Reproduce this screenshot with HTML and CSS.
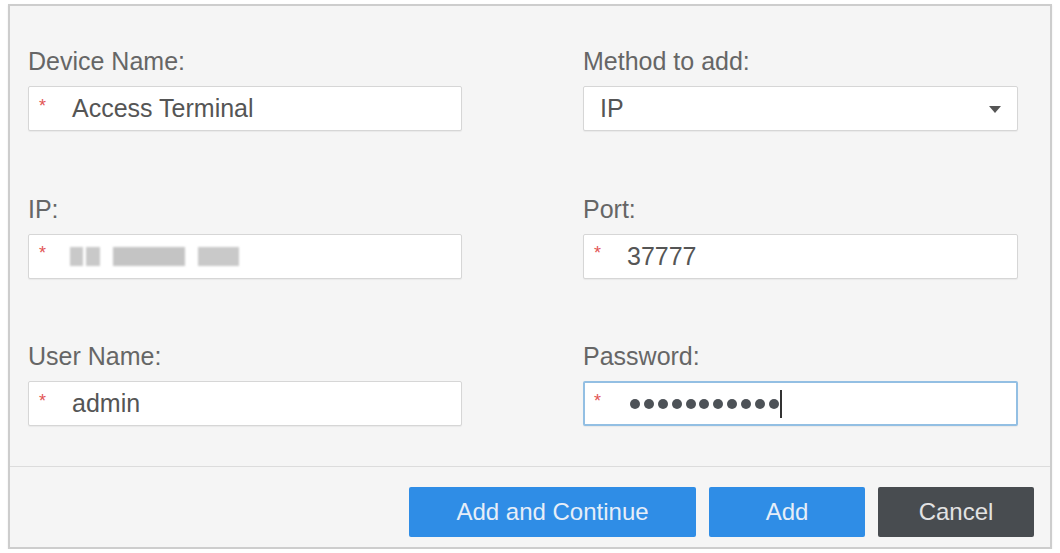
FILE: index.html
```html
<!DOCTYPE html>
<html>
<head>
<meta charset="utf-8">
<link rel="stylesheet" href="styles.css">
</head>
<body>
<div class="dialog">
  <div class="form">
    <div class="field">
      <div class="label">Device Name:</div>
      <div class="input"><span class="req">*</span><span class="val">Access Terminal</span></div>
    </div>
    <div class="field">
      <div class="label">Method to add:</div>
      <div class="input select"><span class="val plain">IP</span><span class="arrow"></span></div>
    </div>
    <div class="field">
      <div class="label">IP:</div>
      <div class="input"><span class="req">*</span><span class="blur">
        <span class="blk b1"></span><span class="blk b2"></span><span class="blk b3"></span><span class="blk b4"></span>
      </span></div>
    </div>
    <div class="field">
      <div class="label">Port:</div>
      <div class="input"><span class="req">*</span><span class="val">37777</span></div>
    </div>
    <div class="field">
      <div class="label">User Name:</div>
      <div class="input"><span class="req">*</span><span class="val">admin</span></div>
    </div>
    <div class="field">
      <div class="label">Password:</div>
      <div class="input focus"><span class="req">*</span><span class="dots">
        <i></i><i></i><i></i><i></i><i></i><i></i><i></i><i></i><i></i><i></i><i></i>
      </span><span class="caret"></span></div>
    </div>
  </div>
  <div class="footer">
    <button class="btn primary wide">Add and Continue</button>
    <button class="btn primary">Add</button>
    <button class="btn dark">Cancel</button>
  </div>
</div>
</body>
</html>
```

FILE: styles.css
```css
html, body {
  margin: 0;
  padding: 0;
  background: #ffffff;
}
body {
  font-family: "Liberation Sans", Arial, sans-serif;
}
.dialog {
  margin: 4px 0 0 8px;
  width: 1044px;
  box-sizing: border-box;
  border: 2px solid #cdcdcd;
  background: #f5f5f5;
  box-shadow: 0 1px 2px rgba(0,0,0,0.08);
}
.form {
  display: grid;
  grid-template-columns: 434px 435px;
  column-gap: 121px;
  row-gap: 62.5px;
  padding: 40px 0 40px 18px;
}
.label {
  font-size: 25px;
  line-height: 30px;
  height: 30px;
  margin-bottom: 10px;
  color: #666666;
}
.input {
  height: 45px;
  box-sizing: border-box;
  border: 1px solid #d6d6d6;
  background: #ffffff;
  border-radius: 2px;
  box-shadow: 0 1px 1px rgba(0,0,0,0.05);
  display: flex;
  align-items: center;
  padding-left: 10px;
  position: relative;
}
.input.focus {
  border: 2px solid #93bfe3;
  padding-left: 9px;
}
.req {
  color: #e25555;
  font-size: 18px;
  width: 33px;
  line-height: 18px;
  margin-top: -6px;
}
.val {
  font-size: 25px;
  color: #555555;
}
.val.plain {
  margin-left: 6px;
}
.select .arrow {
  position: absolute;
  right: 16px;
  top: 19px;
  width: 0;
  height: 0;
  border-left: 6px solid transparent;
  border-right: 6px solid transparent;
  border-top: 7px solid #555555;
}
.blur {
  display: flex;
  align-items: center;
  filter: blur(0.8px);
}
.blk {
  display: inline-block;
  height: 19px;
  background: #c9c9c9;
}
.b1 { width: 13px; margin-left: -2px; }
.b2 { width: 14px; margin-left: 3px; }
.b3 { width: 72px; margin-left: 13px; background: #c4c4c4; }
.b4 { width: 41px; margin-left: 13px; }
.dots {
  display: flex;
  gap: 3.9px;
  margin-left: 3px;
}
.dots i {
  display: block;
  width: 10px;
  height: 10px;
  border-radius: 50%;
  background: #4d5257;
}
.caret {
  display: block;
  width: 2px;
  height: 28px;
  background: #333;
  margin-left: 1px;
}
.footer {
  border-top: 1px solid #dcdcdc;
  display: flex;
  justify-content: flex-end;
  gap: 13px;
  padding: 20px 16px 10px 0;
}
.btn {
  height: 50px;
  border: none;
  border-radius: 2px;
  font-family: "Liberation Sans", Arial, sans-serif;
  font-size: 24px;
  color: #e6eef8;
  width: 156px;
  padding: 0;
}
.btn.wide { width: 287px; }
.btn.primary { background: #2f8de6; }
.btn.dark { background: #484c50; color: #e2e2e2; }
```
